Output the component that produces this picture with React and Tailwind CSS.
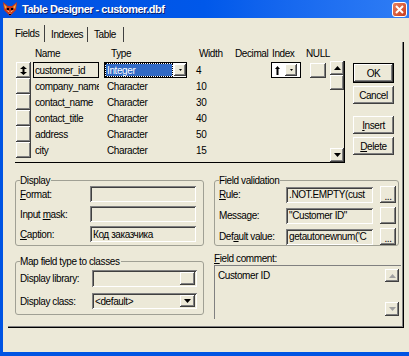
import React from 'react';

const raised = 'shadow-[inset_-1px_-1px_#404040,inset_1px_1px_#ffffff,inset_-2px_-2px_#808080]';
const sunken = 'shadow-[inset_1px_1px_#808080,inset_-1px_-1px_#ffffff,inset_2px_2px_#404040]';

const rows = [
  ['customer_id', 'Integer', '4'],
  ['company_name', 'Character', '10'],
  ['contact_name', 'Character', '30'],
  ['contact_title', 'Character', '40'],
  ['address', 'Character', '50'],
  ['city', 'Character', '15'],
];

const FoxIcon = () => (
  <svg width="16" height="16" viewBox="0 0 16 16">
    <path d="M1 1 L6 5 L10 5 L15 1 L14 9 L8 15 L2 9 Z" fill="#c8361a" />
    <path d="M2 3 L5 6 L3 8 Z M14 3 L11 6 L13 8 Z" fill="#f0b040" />
    <path d="M4 9 L7 10 L8 14 L9 10 L12 9 L8 12 Z" fill="#f6d080" />
    <rect x="5" y="7" width="2" height="2" fill="#000" />
    <rect x="9" y="7" width="2" height="2" fill="#000" />
    <rect x="7" y="13" width="2" height="1" fill="#000" />
  </svg>
);

const Arrow = ({ down, color = '#000' }) => (
  <svg width="7" height="4" viewBox="0 0 7 4">
    <path d={down ? 'M0 0 H7 L3.5 4 Z' : 'M0 4 H7 L3.5 0 Z'} fill={color} />
  </svg>
);

const DropBtn = ({ className }) => (
  <div className={`${raised} bg-[#ece9d8] flex items-center justify-center ${className}`}>
    <svg width="3" height="2" viewBox="0 0 3 2"><path d="M0 0 H3 L1.5 2 Z" fill="#000" /></svg>
  </div>
);

const Btn = ({ children, className = '' }) => (
  <div className={`w-[41px] h-[18px] ${raised} bg-[#ece9d8] flex items-center justify-center ${className}`}>{children}</div>
);

const Input = ({ w, children, h = 'h-[16px]' }) => (
  <div className={`${w} ${h} ${sunken} flex items-center pl-[3px] whitespace-nowrap overflow-hidden`}>{children}</div>
);

const Dots = () => (
  <div className={`ml-[7px] w-[16px] h-[17px] ${raised} flex items-end justify-center pb-[3px] leading-[6px]`}>...</div>
);

export default function App() {
  return (
    <div className="w-[409px] h-[356px] flex flex-col bg-[#0054e3] overflow-hidden font-['Tahoma','Liberation_Sans',sans-serif] text-[10px] tracking-[-0.4px] leading-[11px] text-black">
      {/* title bar */}
      <div className="h-[18px] flex items-center bg-gradient-to-r from-[#0050e0] via-[#0058ea] to-[#2f7df5]">
        <div className="ml-[2px]"><FoxIcon /></div>
        <span className="ml-[4px] text-white font-bold text-[11px] tracking-[-0.5px] [text-shadow:1px_1px_#0a1e6e]">Table Designer - customer.dbf</span>
        <div className="ml-auto mr-[2px] w-[15px] h-[15px] rounded-[3px] border border-white bg-gradient-to-br from-[#e8805e] to-[#c8391a] flex items-center justify-center">
          <svg width="9" height="9" viewBox="0 0 9 9"><path d="M1 1 L8 8 M8 1 L1 8" stroke="#fff" strokeWidth="2" /></svg>
        </div>
      </div>

      <div className="flex-1 flex pl-[3px] pb-[4px]">
        <div className="flex-1 bg-[#ece9d8] flex flex-col">
          {/* tabs */}
          <div className="h-[24px] flex items-end pl-[7px]">
            <div className="w-[35px] h-[17px] border-r border-[#404040] flex items-center pl-[5px]">Fields</div>
            <div className="w-[43px] h-[15px] border-r border-[#404040] flex items-center pl-[6px]">Indexes</div>
            <div className="w-[36px] h-[15px] border-r border-[#404040] flex items-center pl-[6px]">Table</div>
          </div>

          {/* page */}
          <div className="ml-[5px] w-[396px] h-[286px] border-r border-b border-black shadow-[inset_-1px_-1px_#808080] flex flex-col">
            <div className="h-[19px] pt-[6px] pl-[27px] flex">
              <span className="w-[76px]">Name</span>
              <span className="w-[88px]">Type</span>
              <span className="w-[36px]">Width</span>
              <span className="w-[37px]">Decimal</span>
              <span className="w-[34px]">Index</span>
              <span>NULL</span>
            </div>

            <div className="flex pl-[7px]">
              {/* grid */}
              <div className="w-[330px] h-[102px] border-r border-b border-black flex">
                <div className="w-[315px] pt-[1px] flex flex-col">
                  {rows.map(([name, type, width], i) => (
                    <div key={name} className="h-[16px] flex items-center">
                      <div className={`ml-[1px] w-[15px] h-[16px] ${raised} flex items-center justify-center`}>
                        {i === 0 && (
                          <svg width="7" height="9" viewBox="0 0 7 9">
                            <path d="M0 3 L3.5 0 L7 3 Z M0 6 L3.5 9 L7 6 Z" fill="#000" />
                            <rect x="2.5" y="2" width="2" height="5" fill="#000" />
                          </svg>
                        )}
                      </div>
                      {i === 0 ? (
                        <div className="ml-[2px] w-[66px] h-[16px] border border-black flex items-center pl-[1px] whitespace-nowrap overflow-hidden">{name}</div>
                      ) : (
                        <div className="ml-[2px] w-[66px] pl-[2px] whitespace-nowrap overflow-hidden">{name}</div>
                      )}
                      {i === 0 ? (
                        <div className="ml-[5px] w-[83px] h-[16px] border border-black bg-white flex items-center">
                          <div className="ml-[1px] w-[67px] h-[12px] bg-[#316ac5] outline-1 outline-dotted outline-[#000] text-white flex items-center pl-[1px]">{type}</div>
                          <DropBtn className="ml-[2px] w-[12px] h-[12px]" />
                        </div>
                      ) : (
                        <div className="ml-[5px] w-[83px] pl-[3px]">{type}</div>
                      )}
                      <div className="ml-[9px] w-[75px]">{width}</div>
                      {i === 0 && (
                        <>
                          <div className="w-[30px] h-[16px] border border-black bg-white flex items-center">
                            <svg className="ml-[3px]" width="5" height="9" viewBox="0 0 5 9">
                              <path d="M0 3 L2.5 0 L5 3 Z" fill="#000" />
                              <rect x="1.5" y="2" width="2" height="7" fill="#000" />
                            </svg>
                            <DropBtn className="ml-[5px] w-[12px] h-[12px]" />
                          </div>
                          <div className={`ml-[9px] w-[16px] h-[15px] ${raised}`} />
                        </>
                      )}
                    </div>
                  ))}
                </div>
                <div className="w-[14px] flex flex-col">
                  <div className={`h-[14px] ${raised} flex items-center justify-center`}><Arrow /></div>
                  <div className={`h-[15px] ${raised}`} />
                  <div className="flex-1" />
                  <div className={`h-[14px] ${raised} flex items-center justify-center`}><Arrow down /></div>
                </div>
              </div>

              {/* buttons */}
              <div className="ml-[8px] pt-[2px] flex flex-col">
                <div className="w-[41px] h-[20px] border border-black">
                  <Btn className="w-full h-full">OK</Btn>
                </div>
                <Btn className="mt-[3px]">Cancel</Btn>
                <Btn className="mt-[12px]"><span><u>I</u>nsert</span></Btn>
                <Btn className="mt-[3px]"><span><u>D</u>elete</span></Btn>
              </div>
            </div>

            {/* lower section */}
            <div className="flex pl-[7px]">
              <div className="w-[189px] flex flex-col">
                <fieldset className="mt-[12px] h-[71px] border border-[#a0a094] rounded-[3px] pl-[4px] pr-[7px]">
                  <legend className="pr-[1px]">Display</legend>
                  <div className="flex flex-col gap-[4px]">
                    <div className="flex items-center">
                      <span className="w-[70px]"><u>F</u>ormat:</span>
                      <Input w="w-[106px]" />
                    </div>
                    <div className="flex items-center">
                      <span className="w-[70px]">Input <u>m</u>ask:</span>
                      <Input w="w-[106px]" />
                    </div>
                    <div className="flex items-center">
                      <span className="w-[70px]"><u>C</u>aption:</span>
                      <Input w="w-[106px]">Код заказчика</Input>
                    </div>
                  </div>
                </fieldset>

                <fieldset className="mt-[10px] h-[59px] border border-[#a0a094] rounded-[3px] pl-[4px] pr-[5px]">
                  <legend className="pr-[1px]">Map field type to classes</legend>
                  <div className="pt-[3px] flex flex-col gap-[6px]">
                    <div className="flex items-center">
                      <span className="w-[72px]">Display library:</span>
                      <div className={`w-[105px] h-[17px] ${sunken} flex justify-end p-[2px]`}>
                        <div className={`w-[15px] h-full ${raised}`} />
                      </div>
                    </div>
                    <div className="flex items-center">
                      <span className="w-[72px]">Display class:</span>
                      <div className={`w-[105px] h-[16px] ${sunken} flex items-center pl-[3px] p-[2px]`}>
                        <span className="flex-1">&lt;default&gt;</span>
                        <div className={`w-[15px] h-full ${raised} flex items-center justify-center`}><Arrow down /></div>
                      </div>
                    </div>
                  </div>
                </fieldset>
              </div>

              <div className="ml-[10px] w-[187px] flex flex-col">
                <fieldset className="mt-[12px] h-[71px] w-[185px] border border-[#a0a094] rounded-[3px] pl-[4px]">
                  <legend className="pr-[1px]">Field validation</legend>
                  <div className="flex flex-col gap-[4px]">
                    <div className="flex items-center">
                      <span className="w-[67px]"><u>R</u>ule:</span>
                      <Input w="w-[87px]">.NOT.EMPTY(cust</Input>
                      <Dots />
                    </div>
                    <div className="flex items-center">
                      <span className="w-[67px]">Messa<u>g</u>e:</span>
                      <Input w="w-[87px]">"Customer ID"</Input>
                      <div className={`ml-[7px] w-[16px] h-[17px] ${raised}`} />
                    </div>
                    <div className="flex items-center">
                      <span className="w-[67px]">Def<u>a</u>ult value:</span>
                      <Input w="w-[87px]">getautonewnum('C</Input>
                      <Dots />
                    </div>
                  </div>
                </fieldset>
                <span className="mt-[7px]"><u>F</u>ield comment:</span>
                <div className="mt-[1px] h-[54px] flex border-t border-l border-[#808080]">
                  <div className="flex-1 pl-[3px] pt-[4px]">Customer ID</div>
                  <div className="w-[14px] mr-[2px] py-[3px] flex flex-col justify-between">
                    <div className={`h-[13px] ${raised} flex items-center justify-center`}><Arrow color="#a0a0a0" /></div>
                    <div className={`h-[14px] ${raised} flex items-center justify-center`}><Arrow down color="#a0a0a0" /></div>
                  </div>
                </div>
              </div>
            </div>
          </div>
        </div>
      </div>
    </div>
  );
}
